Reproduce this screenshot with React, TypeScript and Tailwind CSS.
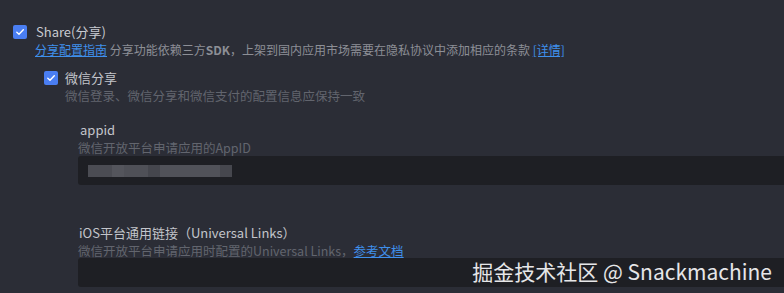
const Check = () => (
  <span className="flex h-[14px] w-[14px] shrink-0 items-center justify-center rounded-[2px] bg-[#4a7ef2]">
    <svg width="10" height="10" viewBox="0 0 10 10" fill="none">
      <path d="M1.8 5.2 L4 7.2 L8.3 2.8" stroke="#ffffff" strokeWidth="1.4" strokeLinecap="round" strokeLinejoin="round" />
    </svg>
  </span>
);

const Masked = () => (
  <div className="ml-[10px] flex h-[12px] w-[144px] blur-[0.6px]">
    <div className="w-[24px] bg-[#4b4c53]" />
    <div className="w-[12px] bg-[#54555c]" />
    <div className="w-[24px] bg-[#4f5057]" />
    <div className="w-[12px] bg-[#45464d]" />
    <div className="w-[60px] bg-[#515259]" />
    <div className="w-[12px] bg-[#46474e]" />
  </div>
);

export default function App() {
  return (
    <div
      className="relative h-[293px] w-[784px] overflow-hidden bg-[#2b2d36]"
      style={{ fontFamily: '"Noto Sans CJK SC", "Noto Sans", sans-serif' }}
    >
      <div className="pl-[13px] pt-[24px]">
        <div className="flex h-[16px] items-center gap-[9px]">
          <Check />
          <span className="text-[13px] leading-[16px] text-[#c8cad0]">Share(分享)</span>
        </div>
        <div className="ml-[22px] mt-[1px] whitespace-nowrap text-[12px] leading-[17px] text-[#8d8f96]">
          <span className="text-[#3f90ec] underline">分享配置指南</span> 分享功能依赖三方
          <span className="font-semibold">SDK</span>，上架到国内应用市场需要在隐私协议中添加相应的条款{' '}
          <span className="text-[#3f90ec] underline">[详情]</span>
        </div>

        <div className="ml-[31px] mt-[12px]">
          <div className="flex h-[16px] items-center gap-[7px]">
            <Check />
            <span className="text-[13px] leading-[16px] text-[#c3c5cb]">微信分享</span>
          </div>
          <div className="ml-[21px] mt-[1px] text-[12.5px] leading-[17px] text-[#62656e]">
            微信登录、微信分享和微信支付的配置信息应保持一致
          </div>
        </div>

        <div className="ml-[65px] mt-[17px]">
          <div className="pl-[2px] text-[13px] leading-[18px] text-[#c3c5cb]">appid</div>
          <div className="text-[12.5px] leading-[18px] text-[#62656e]">微信开放平台申请应用的AppID</div>
          <div className="-mt-px flex h-[29px] w-[720px] items-center rounded-[3px] bg-[#1e1f24]">
            <Masked />
          </div>

          <div className="mt-[39px] pl-px text-[13px] leading-[18px] text-[#c3c5cb]">
            iOS平台通用链接（Universal Links）
          </div>
          <div className="text-[12.5px] leading-[18px] text-[#62656e]">
            微信开放平台申请应用时配置的Universal Links，
            <span className="text-[#3f90ec] underline">参考文档</span>
          </div>
          <div className="-mt-[2px] h-[29px] w-[720px] rounded-[3px] bg-[#1e1f24]" />
        </div>
      </div>

      <div className="absolute right-[12px] top-[256px] whitespace-nowrap text-[21px] leading-[30px] text-[#e6e6e8]">
        掘金技术社区 @ Snackmachine
      </div>
    </div>
  );
}
